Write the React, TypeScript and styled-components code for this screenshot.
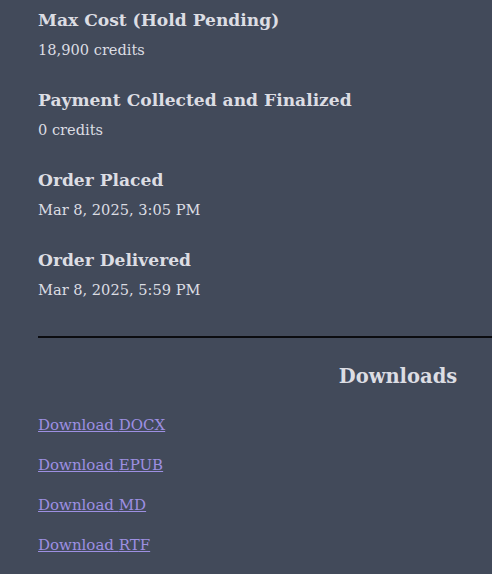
import React from 'react';
import styled, { createGlobalStyle } from 'styled-components';

const Global = createGlobalStyle`
  html, body {
    margin: 0;
    padding: 0;
    background: #424a5a;
    overflow: hidden;
  }
`;

const Frame = styled.div`
  width: 100%;
  overflow: hidden;
`;

const Page = styled.div`
  width: 720px;
  padding: 0 0 0 38px;
  font-family: "DejaVu Serif", Georgia, serif;
  color: #dcdde3;
`;

const Item = styled.div`
  height: 80px;
  padding-top: 9px;
  box-sizing: border-box;
`;

const Label = styled.div`
  font-weight: bold;
  font-size: 17.1px;
  line-height: 23px;
`;

const Value = styled.div`
  font-size: 14.6px;
  line-height: 20px;
  margin-top: 8px;
`;

const Rule = styled.hr`
  border: none;
  border-top: 2px solid #0b0c10;
  margin: 16px 0 0 0;
`;

const Heading = styled.h3`
  text-align: center;
  font-size: 19.5px;
  font-weight: bold;
  margin: 26px 0 25px;
  line-height: 26px;
`;

const LinkList = styled.div`
  display: flex;
  flex-direction: column;
  gap: 20px;
`;

const DlLink = styled.a`
  color: #9d8fe2;
  font-size: 15px;
  line-height: 20px;
  text-decoration: underline;
  align-self: flex-start;
`;

const details = [
  ['Max Cost (Hold Pending)', '18,900 credits'],
  ['Payment Collected and Finalized', '0 credits'],
  ['Order Placed', 'Mar 8, 2025, 3:05 PM'],
  ['Order Delivered', 'Mar 8, 2025, 5:59 PM'],
];

const formats = ['DOCX', 'EPUB', 'MD', 'RTF'];

export default function App() {
  return (
    <Frame>
      <Global />
      <Page>
        {details.map(([k, v]) => (
          <Item key={k}>
            <Label>{k}</Label>
            <Value>{v}</Value>
          </Item>
        ))}
        <Rule />
        <Heading>Downloads</Heading>
        <LinkList>
          {formats.map((f) => (
            <DlLink key={f} href="#">Download {f}</DlLink>
          ))}
        </LinkList>
      </Page>
    </Frame>
  );
}
